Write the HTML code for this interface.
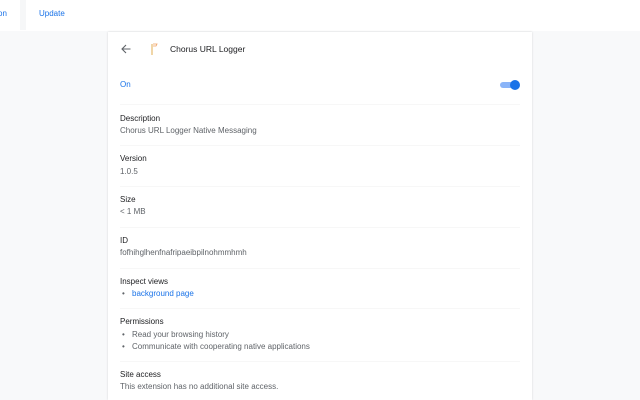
<!DOCTYPE html>
<html><head><style>
body{margin:0;width:640px;height:400px;overflow:hidden;background:#f8f9fa;font-family:"Liberation Sans",sans-serif;font-size:8px;color:#202124;position:relative}
.top{position:absolute;left:0;top:0;width:640px;height:31px;background:#fff}
.btn{position:absolute;top:0;height:28px;background:#fff;color:#1a73e8;line-height:28px;font-size:8px}
.card{position:absolute;left:108px;top:32px;width:424px;height:368px;background:#fff;box-shadow:0 0 2px rgba(0,0,0,.15)}
.t{position:absolute;left:12px;white-space:nowrap}
.g{color:#5f6368}
.hr{position:absolute;left:12px;right:12px;height:1px;background:#f7f7f7}
.b{position:absolute;left:14px;white-space:nowrap}
.b:before{content:"•";position:absolute;left:0;color:#5f6368}
.b span{margin-left:10px}
</style></head><body>
<div class="top"></div>
<div class="btn" style="left:-2px;width:16px">on</div>
<div style="position:absolute;left:20px;top:0;width:6px;height:30px;background:#f6f7f8"></div>
<div class="btn" style="left:39px">Update</div>
<div class="card">
<svg style="position:absolute;left:12px;top:11px" width="12" height="12" viewBox="0 0 12 12"><path d="M10.5 6H2M6 2L2 6l4 4" fill="none" stroke="#5f6368" stroke-width="1.1"/></svg>
<svg style="position:absolute;left:40px;top:10px" width="14" height="14" viewBox="0 0 14 14"><path d="M4 2v11" stroke="#e8c07a" stroke-width="1.3"/><path d="M5 2h4l-1 2h-3" fill="none" stroke="#f0a060" stroke-width=".8"/></svg>
<div class="t" style="left:62px;top:12px;font-size:8.5px;color:#202124">Chorus URL Logger</div>
<div class="t" style="top:48px;color:#1a73e8">On</div>
<div style="position:absolute;left:392px;top:50px;width:16px;height:6px;border-radius:3px;background:#8ab4f8"></div>
<div style="position:absolute;left:402px;top:48px;width:10px;height:10px;border-radius:5px;background:#1a73e8"></div>
<div class="hr" style="top:72px"></div>
<div class="t" style="top:82px">Description</div>
<div class="t g" style="top:94px">Chorus URL Logger Native Messaging</div>
<div class="hr" style="top:113px"></div>
<div class="t" style="top:122px">Version</div>
<div class="t g" style="top:135px">1.0.5</div>
<div class="hr" style="top:154px"></div>
<div class="t" style="top:163px">Size</div>
<div class="t g" style="top:175px">&lt; 1 MB</div>
<div class="hr" style="top:195px"></div>
<div class="t" style="top:204px">ID</div>
<div class="t g" style="top:216px">fofhihglhenfnafripaeibpilnohmmhmh</div>
<div class="hr" style="top:236px"></div>
<div class="t" style="top:245px">Inspect views</div>
<div class="b" style="top:257px"><span style="color:#1a73e8">background page</span></div>
<div class="hr" style="top:276px"></div>
<div class="t" style="top:285px">Permissions</div>
<div class="b g" style="top:298px"><span>Read your browsing history</span></div>
<div class="b g" style="top:310px"><span>Communicate with cooperating native applications</span></div>
<div class="hr" style="top:329px"></div>
<div class="t" style="top:338px">Site access</div>
<div class="t g" style="top:350px">This extension has no additional site access.</div>
</div>
</body></html>
